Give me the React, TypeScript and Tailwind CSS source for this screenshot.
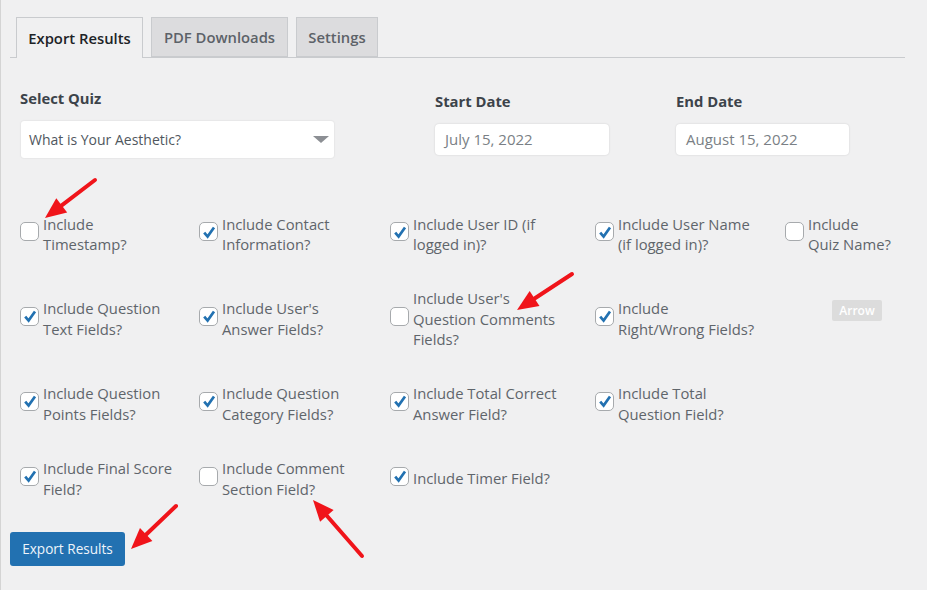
const FONT = "font-['Open_Sans','Noto_Sans',sans-serif]";

type Opt = { label: string[]; checked: boolean };

const rows: (Opt | null)[][] = [
  [
    { label: ["Include", "Timestamp?"], checked: false },
    { label: ["Include Contact", "Information?"], checked: true },
    { label: ["Include User ID (if", "logged in)?"], checked: true },
    { label: ["Include User Name", "(if logged in)?"], checked: true },
    { label: ["Include", "Quiz Name?"], checked: false },
  ],
  [
    { label: ["Include Question", "Text Fields?"], checked: true },
    { label: ["Include User's", "Answer Fields?"], checked: true },
    { label: ["Include User's", "Question Comments", "Fields?"], checked: false },
    { label: ["Include", "Right/Wrong Fields?"], checked: true },
    null,
  ],
  [
    { label: ["Include Question", "Points Fields?"], checked: true },
    { label: ["Include Question", "Category Fields?"], checked: true },
    { label: ["Include Total Correct", "Answer Field?"], checked: true },
    { label: ["Include Total", "Question Field?"], checked: true },
    null,
  ],
  [
    { label: ["Include Final Score", "Field?"], checked: true },
    { label: ["Include Comment", "Section Field?"], checked: false },
    { label: ["Include Timer Field?"], checked: true },
    null,
    null,
  ],
];

function Check({ label, checked }: Opt) {
  return (
    <div className="flex items-center gap-[4px]">
      <span className="mb-[5px] flex size-[19px] shrink-0 items-center justify-center rounded-[5px] border-[1.5px] border-[#a7aaad] bg-white">
        {checked && (
          <svg viewBox="0 0 16 16" className="size-[16px]">
            <path d="M3.2 8.6 L6.6 12.6 L13 3.4" fill="none" stroke="#2271b1" strokeWidth="2.7" strokeLinejoin="miter" />
          </svg>
        )}
      </span>
      <span className="whitespace-nowrap text-[14.8px] leading-[20.5px] text-[#5f656b]">
        {label.map((l) => (
          <span key={l} className="block">{l}</span>
        ))}
      </span>
    </div>
  );
}

function Arrow({ x1, y1, x2, y2 }: { x1: number; y1: number; x2: number; y2: number }) {
  const a = Math.atan2(y2 - y1, x2 - x1);
  const len = 21;
  const w = 9;
  const bx = x2 - len * Math.cos(a);
  const by = y2 - len * Math.sin(a);
  const nx = -Math.sin(a) * w;
  const ny = Math.cos(a) * w;
  return (
    <g>
      <line x1={x1} y1={y1} x2={bx} y2={by} stroke="#f0141a" strokeWidth="4" strokeLinecap="round" />
      <polygon points={`${x2},${y2} ${bx + nx},${by + ny} ${bx - nx},${by - ny}`} fill="#f0141a" />
    </g>
  );
}

export default function App() {
  return (
    <div className={`relative h-[590px] w-[927px] overflow-hidden border-l border-[#d4d4d4] bg-[#f0f0f1] ${FONT}`}>
      <div className="ml-[9px] mr-[22px] mt-[17px] flex h-[41px] gap-[8px] border-b border-[#c9cbce] pl-[6px]">
        <div className="flex h-[41px] w-[127px] items-center justify-center border border-b-0 border-[#c9cbce] bg-[#f0f0f1] text-[14.8px] font-semibold text-[#1d2327]">
          Export Results
        </div>
        <div className="flex h-[40px] w-[137px] items-center justify-center border border-[#c9cbce] bg-[#dcdcde] text-[14.8px] font-semibold text-[#5c6268]">
          PDF Downloads
        </div>
        <div className="flex h-[40px] w-[82px] items-center justify-center border border-[#c9cbce] bg-[#dcdcde] text-[14.8px] font-semibold text-[#5c6268]">
          Settings
        </div>
      </div>

      <div className="ml-[19px] mt-[30px] flex h-[70px] items-start">
        <div className="w-[415px]">
          <div className="text-[14.8px] font-bold leading-[20px] text-[#3c434a]">Select Quiz</div>
          <div className="mt-[13px] ml-[1px] flex h-[37px] w-[313px] items-center justify-between rounded-[3px] bg-white pl-[8px] pr-[5px] text-[14px] text-[#50575e] shadow-[0_0_2px_rgba(0,0,0,0.12)]">
            <span>What is Your Aesthetic?</span>
            <span className="size-0 border-x-[8px] border-t-[7px] border-x-transparent border-t-[#8c8f94]" />
          </div>
        </div>
        <div className="w-[241px] pt-[3px]">
          <div className="text-[14.8px] font-bold leading-[20px] text-[#3c434a]">Start Date</div>
          <div className="mt-[13px] flex h-[31px] w-[174px] items-center rounded-[4px] bg-white pl-[10px] text-[15px] text-[#7a7f85] shadow-[0_0_2px_rgba(0,0,0,0.15)]">
            July 15, 2022
          </div>
        </div>
        <div className="pt-[3px]">
          <div className="text-[14.8px] font-bold leading-[20px] text-[#3c434a]">End Date</div>
          <div className="mt-[13px] flex h-[31px] w-[173px] items-center rounded-[4px] bg-white pl-[10px] text-[15px] text-[#7a7f85] shadow-[0_0_2px_rgba(0,0,0,0.15)]">
            August 15, 2022
          </div>
        </div>
      </div>

      <div className="ml-[19px] mt-[55.5px] grid grid-cols-[179px_191px_205px_190px_auto] items-center gap-y-[33.7px]">
        {rows.map((r, i) =>
          r.map((o, j) =>
            o ? (
              <Check key={`${i}-${j}`} {...o} />
            ) : i === 1 ? (
              <div key={`${i}-${j}`} className="flex h-[21px] w-[50px] translate-x-[47px] -translate-y-[8px] items-center justify-center rounded-[2px] bg-[#dcdcdc] text-[12px] font-semibold text-white">
                Arrow
              </div>
            ) : (
              <div key={`${i}-${j}`} />
            ),
          ),
        )}
      </div>

      <div className="ml-[9px] mt-[32.5px] flex h-[34px] w-[115px] items-center justify-center rounded-[3px] bg-[#2271b1] pt-[1px] text-[13.6px] text-[#eef5fb]">
        Export Results
      </div>

      <svg className="pointer-events-none absolute left-[-1px] top-0" width="927" height="590">
        <Arrow x1={95} y1={180} x2={45} y2={218} />
        <Arrow x1={572} y1={274} x2={517} y2={310} />
        <Arrow x1={176} y1={506} x2={131} y2={549} />
        <Arrow x1={362} y1={556} x2={313} y2={500} />
      </svg>
    </div>
  );
}
